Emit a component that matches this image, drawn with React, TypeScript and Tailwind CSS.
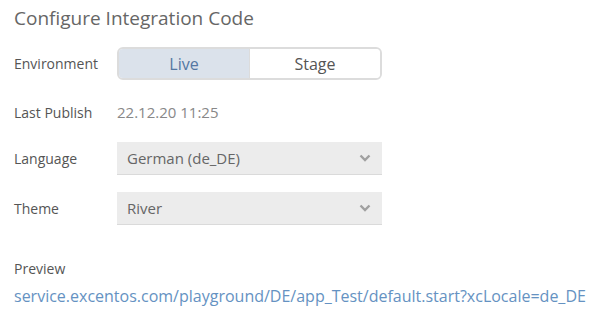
import React from "react";

const font = { fontFamily: '"Open Sans", "Liberation Sans", sans-serif' };

const Chevron = () => (
  <svg width="12" height="8" viewBox="0 0 12 8" className="text-[#a0a0a0]">
    <path d="M1.5 1.5 L6 6 L10.5 1.5" fill="none" stroke="currentColor" strokeWidth="2.4" />
  </svg>
);

const Select = ({ value }: { value: string }) => (
  <div className="flex h-[33px] w-[265px] items-center justify-between border-b border-[#dadada] bg-[#ececec] pl-[10px] pr-[11px] text-[15px] text-[#666]">
    <span>{value}</span>
    <Chevron />
  </div>
);

const Row = ({ label, children, className = "" }: { label: string; children: React.ReactNode; className?: string }) => (
  <div className={`flex items-center ${className}`}>
    <div className="w-[103px] text-[14px] text-[#555]">{label}</div>
    {children}
  </div>
);

export default function App() {
  return (
    <div className="h-[314px] w-[605px] bg-white px-[14px] pt-[4px]" style={font}>
      <h1 className="text-[19px] leading-[28px] text-[#666]">Configure Integration Code</h1>

      <Row label="Environment" className="mt-[15px]">
        <div className="flex h-[33px] w-[265px] overflow-hidden rounded-[6px] border-2 border-[#dcdcdc] text-[16px]">
          <button className="flex-1 bg-[#dbe2eb] text-[#5477a2]">Live</button>
          <button className="flex-1 border-l border-[#dcdcdc] bg-white text-[#555]">Stage</button>
        </div>
      </Row>

      <Row label="Last Publish" className="mt-[16px] h-[32px]">
        <span className="text-[15px] text-[#888]">22.12.20 11:25</span>
      </Row>

      <Row label="Language" className="mt-[14px]">
        <Select value="German (de_DE)" />
      </Row>

      <Row label="Theme" className="mt-[17px]">
        <Select value="River" />
      </Row>

      <div className="mt-[33px] text-[14px] text-[#555]">Preview</div>
      <a className="mt-[6px] block text-[16px] leading-[22px] text-[#6592c2]">
        service.excentos.com/playground/DE/app_Test/default.start?xcLocale=de_DE
      </a>
    </div>
  );
}
